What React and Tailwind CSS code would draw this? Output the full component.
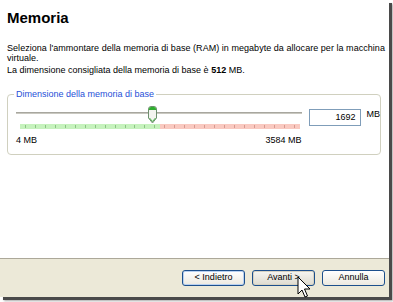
import React from "react";

const font = { fontFamily: '"Liberation Sans", Arial, sans-serif' };

function Thumb() {
  return (
    <svg width="11" height="18" viewBox="0 0 11 18" className="block">
      <path d="M1.5 3 Q1.5 0.5 4 0.5 H7 Q9.5 0.5 9.5 3 V12 L5.5 17 L1.5 12 Z" fill="#f4f4f0" stroke="#6f8f6f" strokeWidth="1" />
      <path d="M2 3 Q2 1 4 1 H7 Q9 1 9 3 V4 H2 Z" fill="#2fae2f" />
      <path d="M2.5 12 L5.5 15.5 L8.5 12" fill="none" stroke="#49b049" strokeWidth="1" />
    </svg>
  );
}

function Cursor() {
  return (
    <svg width="16" height="24" viewBox="0 0 16 24">
      <path d="M1 1 V18 L5 14 L8 21 L10.5 20 L7.5 13 H13 Z" fill="#ffffff" stroke="#000" strokeWidth="1" strokeLinejoin="round" />
    </svg>
  );
}

function Button({ children, hover, focus }) {
  return (
    <div
      className={
        "w-[63px] h-[16px] rounded-[3px] border border-[#1c4f8c] flex items-center justify-center text-[9px] text-black " +
        (hover
          ? "bg-gradient-to-b from-[#f6f6f2] to-[#dedbd0] shadow-[inset_0_0_0_1px_#d6d2c2]"
          : focus
          ? "bg-gradient-to-b from-[#ffffff] to-[#ece9e0] shadow-[inset_0_0_0_1px_#b8d0f0]"
          : "bg-gradient-to-b from-[#ffffff] to-[#ece9e0]")
      }
    >
      {children}
    </div>
  );
}

export default function App() {
  const ticks = Array.from({ length: 28 }, (_, i) => i);
  return (
    <div className="w-[393px] h-[302px] bg-white overflow-hidden relative" style={font}>
      <div className="w-[389px] h-[297px] flex flex-col shadow-[3px_3px_0_#4a4a4a,4px_4px_2px_rgba(0,0,0,0.35)]">
        <div className="flex-1 bg-white px-[7px] pt-[9px]">
          <div className="text-[15px] font-bold leading-[18px] text-black">Memoria</div>
          <div className="mt-[17px] text-[9px] leading-[9.5px] text-black">
            <span className="tracking-[0.04px] whitespace-nowrap">
              Seleziona l'ammontare della memoria di base (RAM) in megabyte da allocare per la macchina
            </span>
            <br />
            virtuale.
          </div>
          <div className="mt-[3px] text-[9px] leading-[9px] text-black">
            La dimensione consigliata della memoria di base è <span className="font-bold">512</span> MB.
          </div>
          <div className="mt-[19px] relative border border-[#d0d0bf] rounded-[4px] h-[61px] mr-[1px]">
            <div className="absolute -top-[6px] left-[6px] bg-white px-[2px] text-[9px] leading-[10px] text-[#1f4fd8]">
              Dimensione della memoria di base
            </div>
            <div className="flex pl-[8px] pt-[10px]">
              <div className="w-[287px] flex flex-col">
                <div className="relative h-[19px]">
                  <div className="absolute left-0 right-0 top-[7px] h-[2px] bg-[#c9c8c0] border-t border-[#a8a79f]" />
                  <div className="absolute left-[131px] top-[1px]">
                    <Thumb />
                  </div>
                </div>
                <div className="ml-[4px] w-[280px] h-[5px] flex">
                  <div className="w-[140px] bg-[#c6f2bd]" />
                  <div className="w-[140px] bg-[#f9c9c0]" />
                </div>
                <div className="ml-[4px] w-[280px] -mt-[4px] h-[3px] flex justify-between px-[5px]">
                  {ticks.map((t) => (
                    <span key={t} className={"w-[1px] h-[3px] " + (t < 14 ? "bg-[#8cc484]" : "bg-[#d89a90]")} />
                  ))}
                </div>
                <div className="flex justify-between mt-[7px] text-[9px] leading-[10px] text-black">
                  <span>4 MB</span>
                  <span>3584 MB</span>
                </div>
              </div>
              <div className="ml-[7px] mt-[4px] flex items-start">
                <div className="w-[52px] h-[17px] border border-[#7f9db9] bg-white text-[9px] text-right pr-[4px] leading-[15px] text-black">
                  1692
                </div>
                <span className="ml-[6px] text-[9px] leading-[10px] text-black">MB</span>
              </div>
            </div>
          </div>
        </div>
        <div className="h-[39px] bg-[#ece9d8] border-t border-[#aca899] flex items-start justify-end gap-[7px] pt-[11px] pr-[4px]">
          <Button focus>&lt; Indietro</Button>
          <Button hover>Avanti &gt;</Button>
          <Button>Annulla</Button>
        </div>
      </div>
      <div className="absolute left-[297px] top-[276px]">
        <Cursor />
      </div>
    </div>
  );
}
